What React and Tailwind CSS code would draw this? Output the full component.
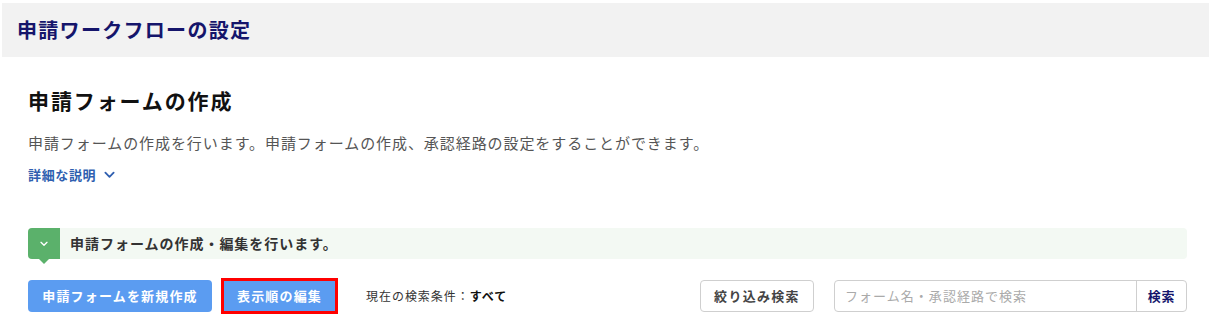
const font = { fontFamily: '"Noto Sans CJK JP", "Noto Sans", sans-serif' };

function ChevronDown({ className }) {
  return (
    <svg viewBox="0 0 12 8" className={className} fill="none" stroke="currentColor" strokeWidth="2" strokeLinecap="round" strokeLinejoin="round">
      <path d="M1.5 1.5 6 6l4.5-4.5" />
    </svg>
  );
}

const App = () => {
  return (
    <div className="w-[1210px] h-[319px] bg-white overflow-hidden pt-[3px] pl-[2px] pr-[1px]" style={font}>
      {/* Page header */}
      <div className="h-[54px] bg-[#f2f2f2] flex items-center pl-[15px]">
        <h1 className="text-[20px] font-bold tracking-[0.065em] text-[#15156b] leading-none">申請ワークフローの設定</h1>
      </div>

      <main className="pl-[26px] pr-[22px]">
        <h2 className="mt-[33px] text-[21px] font-bold tracking-[0.09em] text-[#111] leading-none">申請フォームの作成</h2>
        <p className="mt-[24px] text-[15px] tracking-[0.062em] text-[#555] leading-none">
          申請フォームの作成を行います。申請フォームの作成、承認経路の設定をすることができます。
        </p>
        <button className="mt-[18px] flex items-center gap-[8px] text-[13px] font-bold tracking-[0.05em] text-[#2f5fb0] leading-none">
          詳細な説明
          <ChevronDown className="w-[11px] h-[8px]" />
        </button>

        {/* Info bar */}
        <div className="mt-[47px] h-[31px] bg-[#f3f9f3] rounded-[4px] flex items-center">
          <div className="relative w-[32px] h-[31px] bg-[#5bb16b] rounded-l-[4px] flex items-center justify-center text-white">
            <ChevronDown className="w-[8px] h-[6px]" />
            <span className="absolute left-[11px] bottom-[-5px] w-0 h-0 border-l-[5px] border-r-[5px] border-t-[5px] border-l-transparent border-r-transparent border-t-[#5bb16b]" />
          </div>
          <span className="ml-[10px] text-[14px] font-bold tracking-[0.07em] text-[#333]">申請フォームの作成・編集を行います。</span>
        </div>

        {/* Actions row */}
        <div className="mt-[19px] flex items-center">
          <button className="h-[32px] w-[184px] rounded-[4px] bg-[#5b9cf1] text-white text-[13px] font-bold tracking-[0.09em]">
            申請フォームを新規作成
          </button>
          <div className="ml-[9px] border-[3px] border-[#ff0000]">
            <button className="h-[30px] w-[111px] bg-[#5b9cf1] text-white text-[13px] font-bold tracking-[0.09em]">
              表示順の編集
            </button>
          </div>
          <div className="ml-[28px] text-[12px] tracking-[0.08em] text-[#333]">
            現在の検索条件：<span className="font-bold text-[#111]">すべて</span>
          </div>
          <div className="ml-auto flex items-center">
            <button className="h-[32px] w-[114px] rounded-[4px] border border-[#cfcfcf] bg-white text-[13px] font-bold tracking-[0.1em] text-[#444]">
              絞り込み検索
            </button>
            <div className="ml-[20px] h-[32px] w-[353px] flex rounded-[4px] border border-[#cfcfcf] bg-white">
              <input
                className="flex-1 min-w-0 px-[10px] text-[13px] tracking-[0.08em] text-[#333] placeholder:text-[#aaa] outline-none bg-transparent"
                placeholder="フォーム名・承認経路で検索"
                style={font}
              />
              <button className="w-[50px] border-l border-[#cfcfcf] text-[13px] font-bold text-[#15156b] tracking-[0.05em]">検索</button>
            </div>
          </div>
        </div>
      </main>
    </div>
  );
};

export default App;
